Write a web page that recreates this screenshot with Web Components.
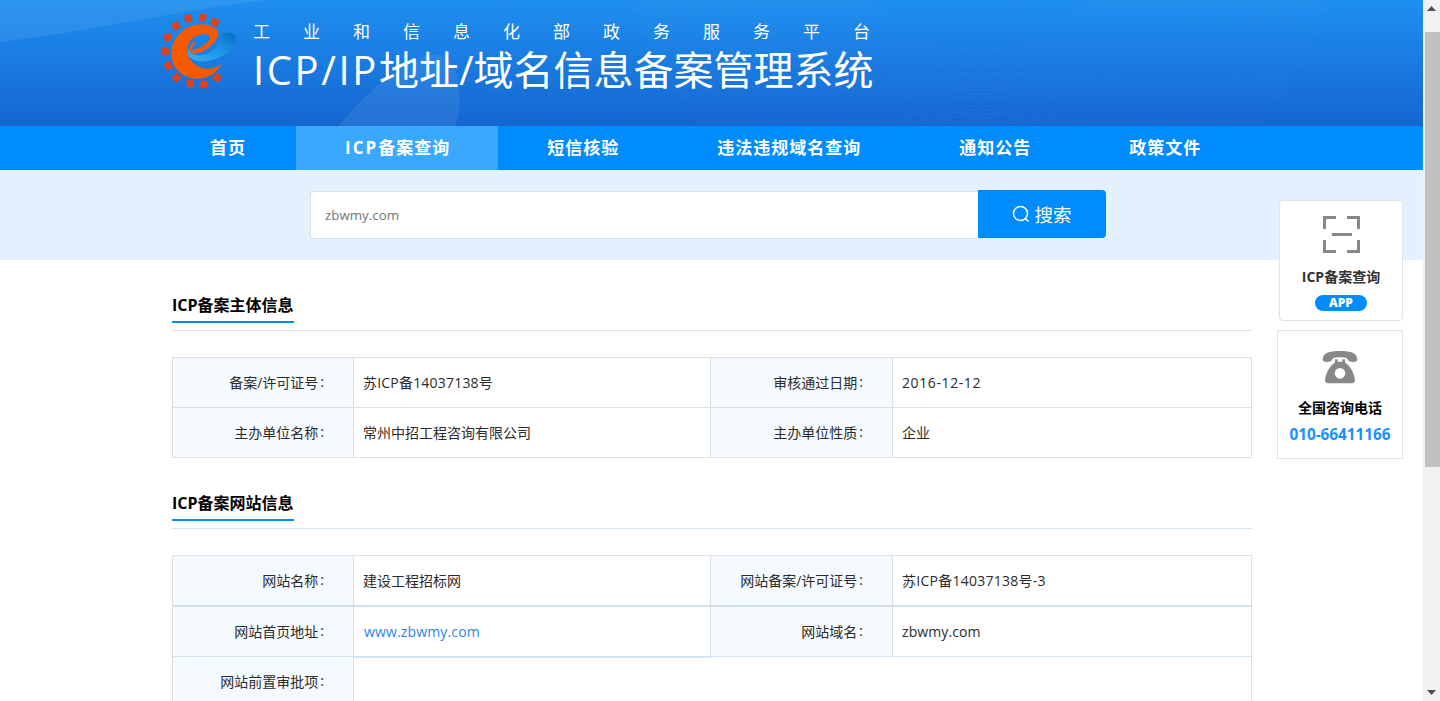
<!DOCTYPE html>
<html lang="zh-CN"><head><meta charset="utf-8"><title>ICP/IP地址/域名信息备案管理系统</title>
<style>html,body{margin:0;height:100%;overflow:hidden;background:#fff;font-family:"Open Sans","Noto Sans CJK SC",sans-serif}</style>
</head><body>
<x-app>
  <x-header></x-header>
  <x-nav></x-nav>
  <x-search value="zbwmy.com"></x-search>
  <x-side></x-side>
  <x-section heading="ICP备案主体信息" style="--top:30px">
    <x-table>
      <x-cell label>备案/许可证号<x-c>:</x-c></x-cell><x-cell style="letter-spacing:.2px">苏ICP备14037138号</x-cell>
      <x-cell label>审核通过日期<x-c>:</x-c></x-cell><x-cell style="letter-spacing:.6px;padding-bottom:0">2016-12-12</x-cell>
      <x-cell label>主办单位名称<x-c>:</x-c></x-cell><x-cell>常州中招工程咨询有限公司</x-cell>
      <x-cell label>主办单位性质<x-c>:</x-c></x-cell><x-cell>企业</x-cell>
    </x-table>
  </x-section>
  <x-section heading="ICP备案网站信息" style="--top:30px">
    <x-table>
      <x-cell label thick>网站名称<x-c>:</x-c></x-cell><x-cell thick>建设工程招标网</x-cell>
      <x-cell label thick>网站备案/许可证号<x-c>:</x-c></x-cell><x-cell thick style="letter-spacing:.25px">苏ICP备14037138号-3</x-cell>
      <x-cell label blue>网站首页地址<x-c>:</x-c></x-cell><x-cell blue under style="letter-spacing:.15px;padding-left:10px;padding-bottom:0"><x-link>www.zbwmy.com</x-link></x-cell>
      <x-cell label blue>网站域名<x-c>:</x-c></x-cell><x-cell blue style="letter-spacing:.1px;padding-bottom:0">zbwmy.com</x-cell>
      <x-cell label>网站前置审批项<x-c>:</x-c></x-cell><x-cell wide></x-cell>
    </x-table>
  </x-section>
</x-app>
<script>
function def(name, css, html, extra){
  customElements.define(name, class extends HTMLElement{
    constructor(){super();const r=this.attachShadow({mode:'open'});
      r.innerHTML='<style>'+css+'</style>'+(typeof html==='function'?html(this):html);}
    connectedCallback(){ if(extra) extra(this); }
  });
}
def('x-app',`:host{display:flex;height:100vh;overflow:hidden;color:#333}
.main{flex:1;min-width:0;position:relative;overflow:hidden}`,
`<div class="main"><slot></slot></div><x-scrollbar></x-scrollbar>`);

def('x-scrollbar',`:host{display:flex;flex-direction:column;width:17px;height:100%;background:#f1f1f1;flex:none}
.b{height:17px;display:flex;align-items:center;justify-content:center;flex:none}
.t{margin:15px 0 0 2px;height:435px;background:#c1c1c1;flex:none}
.s{flex:1}svg{display:block}`,
`<div class="b"><svg width="9" height="5" viewBox="0 0 9 5"><path d="M4.5 0L9 5H0Z" fill="#505050"/></svg></div><div class="t"></div><div class="s"></div><div class="b"><svg width="9" height="5" viewBox="0 0 9 5"><path d="M0 0H9L4.5 5Z" fill="#505050"/></svg></div>`);

def('x-header',`:host{display:block;height:126px;position:relative;overflow:hidden;background:linear-gradient(180deg,#1e8fee 0%,#1566d1 100%)}
.bg{position:absolute;left:0;top:0}
.in{position:relative;display:flex;gap:8px;padding:5px 0 0 155px}
svg.logo{display:block;flex:none}
.txt{color:#fff;padding-top:15px}
.sub{font-size:17px;line-height:24px;letter-spacing:33px;white-space:nowrap}
.ti{font-size:40px;line-height:54px;margin-top:-1px;white-space:nowrap}
.ti span{letter-spacing:2.6px}`,
()=>{
  let arcs='';for(let r=150;r<360;r+=4){arcs+=`<circle cx="980" cy="-100" r="${r}"/>`;}
  const sq=[[100,40,-8],[143,37,8],[180,52,28],[63,62,-28],[38,97,-15],[30,139,0],[40,182,-25],[65,218,-45],[106,236,-8],[147,238,8],[186,218,35]]
   .map(([x,y,a])=>`<rect x="${x-11}" y="${y-11}" width="22" height="22" fill="#e0401a" transform="rotate(${a} ${x} ${y})"/>`).join('');
  return `<svg class="bg" width="1423" height="126" viewBox="0 0 1423 126">
    <path d="M0 42C90 32 190 8 268 0H0Z" fill="#fff" opacity=".07"/>
    <path d="M338 126C365 95 400 62 430 55C455 50 466 85 456 126Z" fill="#fff" opacity=".07"/>
    <g fill="none" stroke="#fff" stroke-width="1" opacity=".035">${arcs}</g></svg>
  <div class="in"><svg class="logo" width="90" height="90" viewBox="0 0 270 270">
    <defs><linearGradient id="g" x1="0" y1="1" x2="1" y2="0"><stop offset="0" stop-color="#39b4f2"/><stop offset=".6" stop-color="#1a8ee4"/><stop offset="1" stop-color="#0b6cbd"/></linearGradient></defs>
    ${sq}
    <path d="M200 85C225 78 245 85 243 105C238 140 180 175 130 168C105 165 92 145 100 128C105 150 130 155 150 148C180 140 205 110 200 85Z" fill="url(#g)"/>
    <path d="M190 80C170 52 110 48 75 85C33 125 43 198 100 217C140 230 180 212 200 178C170 198 135 195 115 175C90 150 90 115 118 97C140 84 165 85 165 95C165 115 130 130 108 137C112 122 125 112 120 108C105 115 100 135 110 145C140 150 190 115 190 80Z" fill="#f65a00"/>
  </svg><div class="txt"><div class="sub">工业和信息化部政务服务平台</div><div class="ti"><span>ICP/IP</span>地址/域名信息备案管理系统</div></div></div>`;
});

def('x-nav',`:host{display:flex;height:44px;background:#008cff;padding-left:161px}
a{display:block;padding:0 49px;font-size:17px;line-height:44px;font-weight:700;letter-spacing:1px;color:#fff;white-space:nowrap}
a:first-of-type{padding-right:50px}
a.on{padding-left:49px;padding-right:48px}
a span{letter-spacing:2px}
a.on{background:#3aa8ff}`,
`<a>首页</a><a class="on"><span>ICP</span>备案查询</a><a>短信核验</a><a>违法违规域名查询</a><a>通知公告</a><a>政策文件</a>`);

def('x-search',`:host{display:flex;height:90px;background:#e3f1fe;padding:20px 0 0 310px;box-sizing:border-box}
.i{width:668px;height:48px;margin-top:1px;box-sizing:border-box;border:1px solid #dcdfe6;border-right:0;border-radius:4px 0 0 4px;background:#fff;padding-left:14px;font-size:13.33px;line-height:46px;color:#757575}
.b{width:128px;height:48px;background:#008cff;border-radius:0 4px 4px 0;color:#fff;display:flex;align-items:center;justify-content:center;gap:4px;font-size:18.5px}
svg{display:block}`,
h=>`<div class="i">${h.getAttribute('value')}</div><div class="b"><svg width="18" height="18" viewBox="0 0 18 18" fill="none" stroke="#fff" stroke-width="1.5"><circle cx="8.5" cy="8.5" r="7"/><path d="M13.5 13.5L16.5 16.5"/></svg><span>搜索</span></div>`);

def('x-section',`:host{display:block;width:1080px;margin-left:172px;padding-top:var(--top)}
.h{height:40px;border-bottom:1px solid #d3e3f2;box-sizing:content-box}
.t{display:inline-block;font-size:16px;font-weight:700;color:#000;line-height:30px;height:31px;border-bottom:2px solid #008cff}
.c{padding-top:26px}`,
h=>`<div class="h"><span class="t">${h.getAttribute('heading')}</span></div><div class="c"><slot></slot></div>`);

def('x-table',`:host{display:grid;grid-template-columns:181px 357px 182px 359px;border-left:1px solid #dcdfe6;border-top:1px solid #dcdfe6;width:1080px;box-sizing:border-box;font-size:14px}`,`<slot></slot>`);

def('x-cell',`:host{display:flex;align-items:center;box-sizing:border-box;height:50px;padding:0 0 2px 9px;border-right:1px solid #dcdfe6;border-bottom:1px solid #dcdfe6;color:#2b2b2b;font-size:14px;white-space:nowrap;position:relative}
:host([label]){justify-content:flex-end;padding:0 29px 2px 0;background:#f5fafe}
:host([thick]){height:51px;border-bottom:2px solid #d5dfe8}
:host([blue]){border-bottom-color:#d3e3f2}
:host([under]){box-shadow:0 1px 0 #d3e3f2}
:host([wide]){grid-column:span 3}`,`<slot></slot>`);

def('x-c',`:host{display:inline-block;margin-left:2px}`,`<slot></slot>`);
def('x-link',`:host{color:#2b85f0}`,`<slot></slot>`);

def('x-side',`:host{position:absolute;right:20px;top:200px;width:126px;display:flex;flex-direction:column;align-items:flex-end;gap:9px;text-align:center}
.c{box-sizing:border-box;background:#fff;border:1px solid #dfe2ea}
.a{width:124px;height:121px;border-radius:4px;padding-top:15px}
.b{width:126px;height:129px;padding-top:19px}
svg{display:block;margin:0 auto}
.n{font-size:14px;font-weight:700;color:#333;line-height:20px;margin-top:14px}
.p{width:52px;height:16px;border-radius:8px;background:#008cff;color:#fff;font-size:12px;font-weight:800;line-height:16px;margin:8px auto 0}
.m{font-size:14px;font-weight:700;color:#000;line-height:20px;margin-top:14px}
.k{font-size:15.3px;font-weight:700;color:#1890ff;line-height:22px;margin-top:5px}`,
`<div class="c a"><svg width="37" height="37" viewBox="0 0 37 37" fill="none" stroke="#888" stroke-width="3"><path d="M1.5 13V1.5H13M24 1.5H35.5V13M1.5 24V35.5H13M24 35.5H35.5V24M9 18.5H29"/></svg>
<div class="n">ICP备案查询</div><div class="p">APP</div></div>
<div class="c b"><svg width="38" height="34" viewBox="30 30 110 102"><path fill="#888" d="M33 60C33 35 60 33 85 33C110 33 137 35 137 60C137 68 110 68 108 58C106 50 64 50 62 58C60 68 33 68 33 60Z"/><path fill="#888" d="M70 58V68C55 75 42 100 40 120Q40 130 50 130H120Q130 130 130 120C128 100 115 75 100 68V58H92V65H78V58Z"/><circle cx="85" cy="100" r="16" fill="#fff"/></svg>
<div class="m">全国咨询电话</div><div class="k">010-66411166</div></div>`);
</script>
</body></html>
